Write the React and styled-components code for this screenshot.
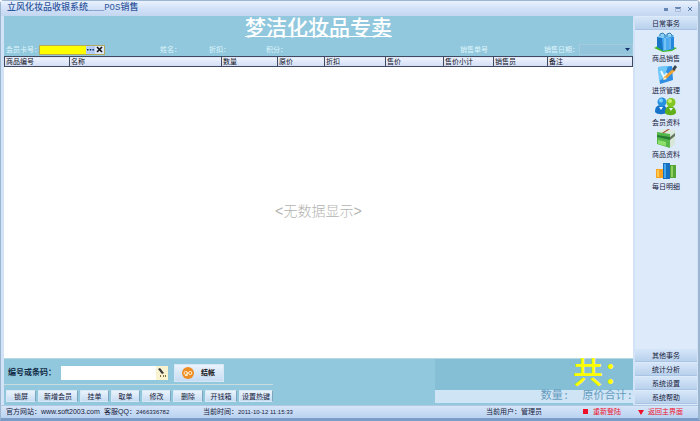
import React from "react";
import styled, { createGlobalStyle, css } from "styled-components";

const GlobalStyle = createGlobalStyle`
  * { box-sizing: border-box; }
  body {
    margin: 0;
    color: #16203a;
    font-family: "Liberation Sans", "Noto Sans CJK SC", sans-serif;
    font-size: 7px;
    line-height: 10px;
  }
  button, input, select { font: inherit; color: inherit; margin: 0; }
`;

const mono = css`
  font-family: "Liberation Mono", "Noto Sans CJK SC", monospace;
`;

const Window = styled.div`
  min-height: 100vh;
  display: flex;
  flex-direction: column;
  background: #d3e3f7;
  border: 1px solid #9db6d0;
  border-right-width: 2px;
  border-bottom: 3px solid #7c9cc8;
  border-radius: 4px 4px 0 0;
`;

const TitleBar = styled.header`
  height: 15px;
  display: flex;
  align-items: center;
  justify-content: space-between;
  padding: 0 4px 0 6px;
  background: linear-gradient(#e9f1fd, #cfdff7 60%, #c3d7f0);
`;

const WindowTitle = styled.h1`
  ${mono}
  margin: 0;
  font-size: 9px;
  line-height: 13px;
  font-weight: 500;
  color: #2f569c;
`;

const WindowControls = styled.div`
  display: flex;
  gap: 4px;
`;

const ControlButton = styled.button`
  width: 8px;
  height: 8px;
  padding: 0;
  border: 0;
  background: none;
  display: flex;
  svg { width: 8px; height: 8px; }
`;

const Body = styled.div`
  flex: 1;
  display: flex;
  gap: 2px;
  padding: 0 1px 0 3px;
`;

const Main = styled.main`
  flex: 1;
  min-width: 0;
  display: flex;
  flex-direction: column;
  background: #92c8de;
`;

const ShopName = styled.h2`
  margin: 0;
  height: 27px;
  text-align: center;
  font-size: 21px;
  line-height: 23px;
  font-weight: 500;
  color: #fff;
  text-decoration: underline;
  text-decoration-thickness: 1px;
  text-underline-offset: 1px;
`;

const SaleInfo = styled.div`
  display: grid;
  grid-template-columns: 154px 49px 57px 1fr 84px 89px;
  align-items: center;
  height: 13px;
  padding-left: 2px;
  color: #dff5fa;
`;

const Field = styled.div`
  display: flex;
  align-items: center;
`;

const MemberLabel = styled.label`
  width: 33px;
  white-space: nowrap;
`;

const MemberBox = styled.div`
  display: flex;
  width: 66px;
  height: 10px;
  border: 1px solid #b5a95c;
  background: #dbe6f8;
`;

const MemberInput = styled.input`
  flex: 1;
  min-width: 0;
  padding: 0;
  border: 0;
  background: #ffff00;
  color: #222;
  outline: 0;
`;

const TinyButton = styled.button`
  width: 9px;
  padding: 0;
  border: 0;
  background: ${(p) => (p.$active ? "#b4cdf4" : "#dbe6f8")};
  display: flex;
  align-items: center;
  justify-content: center;
  svg { width: 7px; height: 7px; }
`;

const DateLabel = styled.label`
  width: 35px;
  white-space: nowrap;
`;

const DateSelect = styled.select`
  flex: 1;
  min-width: 0;
  height: 11px;
  padding: 0;
  border: 1px solid #a3cadd;
  border-radius: 0;
  appearance: none;
  background: #92c5dc url("data:image/svg+xml,%3Csvg xmlns='http://www.w3.org/2000/svg' width='6' height='4'%3E%3Cpath d='M1 0h5L3.500 3z' fill='%23122f69'/%3E%3C/svg%3E") no-repeat right 2px center;
`;

const Goods = styled.section`
  flex: 1;
  display: flex;
  flex-direction: column;
  background: #fff;
`;

const GoodsTable = styled.table`
  width: 100%;
  table-layout: fixed;
  border-collapse: collapse;
  color: #11131d;
`;

const HeadCell = styled.th`
  width: ${(p) => (p.$w ? `${p.$w}px` : "auto")};
  height: 10px;
  padding: 0 1px;
  border: 1px solid #3f4a60;
  background: linear-gradient(#eff3fd, #d2ddf5);
  font-weight: 400;
  line-height: 8px;
  text-align: left;
  white-space: nowrap;
`;

const EmptyNotice = styled.p`
  ${mono}
  flex: 1;
  margin: 0;
  display: flex;
  align-items: center;
  justify-content: center;
  padding-bottom: 2px;
  font-size: 14px;
  line-height: 20px;
  font-weight: 300;
  color: #b3b3b0;
`;

const Checkout = styled.section`
  display: flex;
  justify-content: space-between;
  height: 47px;
  border-top: 1px solid #b8d8e2;
`;

const Entry = styled.div`
  display: flex;
  flex-direction: column;
`;

const CodeRow = styled.form`
  display: flex;
  align-items: center;
  height: 26px;
  padding: 2px 0 0 4px;
  border-bottom: 1px solid #c9dcde;
`;

const CodeLabel = styled.label`
  width: 53px;
  font-size: 8px;
  font-weight: 700;
  color: #102a44;
  white-space: nowrap;
`;

const CodeBox = styled.div`
  display: flex;
  width: 107px;
  height: 14px;
  background: #fff;
`;

const CodeInput = styled.input`
  flex: 1;
  min-width: 0;
  padding: 0 2px;
  border: 0;
  background: #fff;
  outline: 0;
`;

const PickButton = styled.button`
  width: 12px;
  padding: 0;
  border: 0;
  background: #faf3d0;
  display: flex;
  align-items: center;
  justify-content: center;
  svg { width: 10px; height: 10px; }
`;

const raised = css`
  border: 1px solid #d7e8f5;
  background: linear-gradient(#eaf3fc, #c7dcf3);
`;

const PayButton = styled.button`
  ${raised}
  display: flex;
  align-items: center;
  gap: 7px;
  width: 50px;
  height: 18px;
  margin-left: 6px;
  padding: 0 0 0 7px;
  font-weight: 700;
  color: #111;
  white-space: nowrap;
  svg { width: 12px; height: 12px; flex: none; }
`;

const Actions = styled.div`
  display: flex;
  gap: 2px;
  padding: 5px 0 0 2px;
`;

const ActionButton = styled.button`
  ${raised}
  width: ${(p) => p.$w}px;
  height: 12px;
  padding: 0;
  line-height: 9px;
  border-right-color: #7fa5bd;
  white-space: nowrap;
`;

const Totals = styled.div`
  width: 198px;
  margin-bottom: 2px;
  display: flex;
  flex-direction: column;
  background: #84bfd6;
`;

const GrandTotal = styled.strong`
  flex: 1;
  display: flex;
  justify-content: flex-end;
  font-size: 30px;
  line-height: 27px;
  font-weight: 500;
  color: #ffff00;
`;

const TotalsRow = styled.div`
  ${mono}
  height: 13px;
  display: flex;
  justify-content: flex-end;
  gap: 13px;
  background: #cfe4f5;
  font-size: 11px;
  line-height: 13px;
  color: #659cc0;
`;

const Sidebar = styled.nav`
  width: 62px;
  display: flex;
  flex-direction: column;
  gap: 1px;
  padding: 1px 0;
  background: #dceafa;
`;

const GroupButton = styled.button`
  height: 13px;
  padding: 0;
  border: 0;
  border-bottom: 1px solid #a9c4e4;
  background: linear-gradient(#d6e6f9, #b9d1ec);
  line-height: 11px;
  text-align: center;
`;

const Shortcuts = styled.div`
  flex: 1;
  display: flex;
  flex-direction: column;
  padding-top: 1px;
`;

const Shortcut = styled.button`
  height: 32px;
  padding: 0;
  border: 0;
  background: none;
  display: flex;
  flex-direction: column;
  align-items: center;
  gap: 2px;
  svg { width: 24px; height: 20px; flex: none; }
`;

const StatusBar = styled.footer`
  display: grid;
  grid-template-columns: 98px 99px 1fr 97px 55px 60px;
  align-items: center;
  height: 13px;
  padding-left: 5px;
  border-top: 1px solid #b0c8e2;
  background: linear-gradient(#d6e5f8, #b9d2f1);
  white-space: nowrap;
`;

const Digits = styled.span`
  font-size: 6px;
`;

const StatusButton = styled.button`
  display: flex;
  align-items: center;
  gap: 4px;
  padding: 0;
  border: 0;
  background: none;
  color: #f0122d;
  svg { width: 6px; height: 6px; }
`;

const BagIcon = () => (
  <svg viewBox="0 0 24 20">
    <path d="M0 16l8-4 15 4-5 3-9 1z" fill="#43bd26" />
    <path d="M3 5l6-1v15l-6-4z" fill="#1777c4" />
    <path d="M8 4l12 1v12l-11 2z" fill="#4baaf0" />
    <path d="M15 5l5 0v12l-5 1z" fill="#2587dc" />
    <path d="M3 5l5-3 12 1v2l-12 1z" fill="#86cdf6" />
    <path d="M6 4V2l3-1 2 2v3M13 5V2l3-1 2 2v2" fill="none" stroke="#2a7cb5" />
    <path d="M11 6v12M16 6v11" stroke="#9bdcfc" />
  </svg>
);

const OrderIcon = () => (
  <svg viewBox="0 0 24 20">
    <path d="M4 3l14-1 1 14-13 4z" fill="#2f8ee2" />
    <path d="M4 3l10-1-4 12-5 3z" fill="#70c9f8" />
    <path d="M7 7l3 6 3-4" fill="none" stroke="#eafaff" strokeWidth="2" />
    <path d="M10 13L20 4l2 2-9 8-4 2z" fill="#f3a332" />
    <path d="M18 5l3-4 2 2-3 4z" fill="#37444d" />
    <path d="M9 16l2-3 2 2z" fill="#fff0c8" />
  </svg>
);

const MembersIcon = () => (
  <svg viewBox="0 0 24 20">
    <path d="M1 16c0-5 2-7 6-7s6 2 6 7c-2 3-10 3-12 0z" fill="#1673c9" />
    <circle cx="8" cy="6" r="4.500" fill="#2692df" />
    <circle cx="7" cy="4.500" r="2" fill="#79d0fa" />
    <path d="M11 17c0-5 2-7 5-7s6 2 6 7c-2 3-9 3-11 0z" fill="#61af19" />
    <circle cx="17" cy="6.500" r="4.500" fill="#83c723" />
    <circle cx="16" cy="5" r="2" fill="#cdf070" />
    <path d="M5 11l2 3 2-3M15 12l2 3 2-3" fill="#e4f7fb" />
  </svg>
);

const BoxIcon = () => (
  <svg viewBox="0 0 24 20">
    <path d="M3 4l6-3 12 1-5 4z" fill="#dfe9dc" />
    <path d="M3 4l13 2v14L3 16z" fill="#55b64a" />
    <path d="M16 6l5-4v14l-5 4z" fill="#d8e6d8" />
    <path d="M3 7l13 2v3L3 9z" fill="#287d36" />
    <path d="M16 9l5-4v3l-5 4z" fill="#67765b" />
    <path d="M4 12l8 2v4l-8-2z" fill="#8ee06d" />
    <path d="M8 5l6-4h2l-6 4z" fill="#a94e38" />
  </svg>
);

const ChartIcon = () => (
  <svg viewBox="0 0 24 20">
    <path d="M2 9h7v9H2z" fill="#f7a321" />
    <path d="M3 10h2v7H3z" fill="#ffc84f" />
    <path d="M9 3h7v16H9z" fill="#176fc0" />
    <path d="M10 4h2v14h-2z" fill="#45a8ed" />
    <path d="M16 5h6v13h-6z" fill="#55a637" />
    <path d="M17 6h2v11h-2z" fill="#8ed05a" />
  </svg>
);

const columns = [
  ["商品编号", 65],
  ["名称", 0],
  ["数量", 56],
  ["原价", 47],
  ["折扣", 61],
  ["售价", 58],
  ["售价小计", 50],
  ["销售员", 54],
  ["备注", 85],
];

const actions = [
  ["锁屏", 30],
  ["新增会员", 40],
  ["挂单", 29],
  ["取单", 29],
  ["修改", 29],
  ["删除", 30],
  ["开钱箱", 32],
  ["设置热键", 34],
];

const shortcuts = [
  ["商品销售", BagIcon],
  ["进货管理", OrderIcon],
  ["会员资料", MembersIcon],
  ["商品资料", BoxIcon],
  ["每日明细", ChartIcon],
];

const groups = ["其他事务", "统计分析", "系统设置", "系统帮助"];

export default function App() {
  return (
    <>
      <GlobalStyle />
      <Window lang="zh-CN">
        <TitleBar>
          <WindowTitle>立风化妆品收银系统___POS销售</WindowTitle>
          <WindowControls>
            <ControlButton aria-label="最小化">
              <svg viewBox="0 0 8 8"><path d="M2 3h4v3H2z" fill="#6686b4" /></svg>
            </ControlButton>
            <ControlButton aria-label="最大化">
              <svg viewBox="0 0 8 8"><path d="M1 2h6v2H1z" fill="#6686b4" /><path d="M1.500 3v3.500h5V3" fill="none" stroke="#a9bddb" /></svg>
            </ControlButton>
            <ControlButton aria-label="关闭">
              <svg viewBox="0 0 8 8"><path d="M2 2l4 4M6 2L2 6" stroke="#5577aa" /></svg>
            </ControlButton>
          </WindowControls>
        </TitleBar>

        <Body>
          <Main>
            <ShopName>梦洁化妆品专卖</ShopName>
            <SaleInfo>
              <Field>
                <MemberLabel htmlFor="member">会员卡号：</MemberLabel>
                <MemberBox>
                  <MemberInput id="member" />
                  <TinyButton $active aria-label="查找会员">
                    <svg viewBox="0 0 7 7"><path d="M0 3h1.500v1.500H0zM2.700 3h1.500v1.500H2.700zM5.400 3h1.500v1.500H5.400z" fill="#172b55" /></svg>
                  </TinyButton>
                  <TinyButton aria-label="清除会员">
                    <svg viewBox="0 0 7 7"><path d="M1 1l5 5M6 1L1 6" stroke="#111" strokeWidth="1.600" /></svg>
                  </TinyButton>
                </MemberBox>
              </Field>
              <span>姓名：</span>
              <span>折扣：</span>
              <span>积分：</span>
              <span>销售单号</span>
              <Field>
                <DateLabel htmlFor="date">销售日期：</DateLabel>
                <DateSelect id="date" />
              </Field>
            </SaleInfo>

            <Goods>
              <GoodsTable>
                <thead>
                  <tr>
                    {columns.map(([name, width]) => (
                      <HeadCell key={name} $w={width} scope="col">{name}</HeadCell>
                    ))}
                  </tr>
                </thead>
              </GoodsTable>
              <EmptyNotice>&lt;无数据显示&gt;</EmptyNotice>
            </Goods>

            <Checkout>
              <Entry>
                <CodeRow onSubmit={(e) => e.preventDefault()}>
                  <CodeLabel htmlFor="code">编号或条码：</CodeLabel>
                  <CodeBox>
                    <CodeInput id="code" />
                    <PickButton type="button" aria-label="选择商品">
                      <svg viewBox="0 0 10 10">
                        <path d="M1 1l2-1 4 5-2 1z" fill="#39383a" />
                        <path d="M3 8h1M6 8h1M8 8h1" stroke="#594719" strokeWidth="1.400" />
                      </svg>
                    </PickButton>
                  </CodeBox>
                  <PayButton type="submit">
                    <svg viewBox="0 0 12 12">
                      <circle cx="6" cy="6" r="6" fill="#ee8d23" />
                      <circle cx="3.700" cy="6" r="1.600" fill="none" stroke="#fff0d2" />
                      <circle cx="8.200" cy="6" r="1.600" fill="none" stroke="#fff0d2" />
                      <path d="M5.300 5v3.500H3" fill="none" stroke="#fff0d2" />
                    </svg>
                    结帐
                  </PayButton>
                </CodeRow>
                <Actions>
                  {actions.map(([name, width]) => (
                    <ActionButton key={name} $w={width}>{name}</ActionButton>
                  ))}
                </Actions>
              </Entry>
              <Totals>
                <GrandTotal>共：</GrandTotal>
                <TotalsRow>
                  <span>数量:</span>
                  <span>原价合计:</span>
                </TotalsRow>
              </Totals>
            </Checkout>
          </Main>

          <Sidebar>
            <GroupButton>日常事务</GroupButton>
            <Shortcuts>
              {shortcuts.map(([name, Icon]) => (
                <Shortcut key={name}>
                  <Icon />
                  {name}
                </Shortcut>
              ))}
            </Shortcuts>
            {groups.map((name) => (
              <GroupButton key={name}>{name}</GroupButton>
            ))}
          </Sidebar>
        </Body>

        <StatusBar>
          <span>官方网站：www.soft2003.com</span>
          <span>客服QQ：<Digits>2466336782</Digits></span>
          <span>当前时间：<Digits>2011-10-12 11:15:33</Digits></span>
          <span>当前用户：管理员</span>
          <StatusButton>
            <svg viewBox="0 0 6 6"><path d="M0 0h5v5H0z" fill="#ee1029" /></svg>
            重新登陆
          </StatusButton>
          <StatusButton>
            <svg viewBox="0 0 6 6"><path d="M0 1h6L3 6z" fill="#ee1029" /></svg>
            返回主界面
          </StatusButton>
        </StatusBar>
      </Window>
    </>
  );
}
